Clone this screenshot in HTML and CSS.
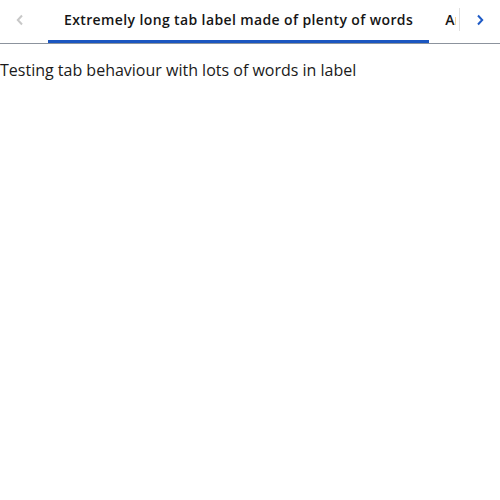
FILE: index.html
```html
<!DOCTYPE html>
<html>
<head>
<meta charset="utf-8">
<link rel="stylesheet" href="styles.css">
</head>
<body>
<div class="tabbar">
  <button class="nav nav-prev" aria-label="Previous">
    <svg width="10" height="12" viewBox="0 0 10 12"><path d="M7 1.5 L2.8 6 L7 10.5" fill="none" stroke="#c8c8c8" stroke-width="2"/></svg>
  </button>
  <div class="scroller">
    <div class="tab active">Extremely long tab label made of plenty of words</div>
    <div class="tab">Another tab</div>
  </div>
  <button class="nav nav-next" aria-label="Next">
    <svg width="10" height="12" viewBox="0 0 10 12"><path d="M3 1.5 L7.2 6 L3 10.5" fill="none" stroke="#1f5bc6" stroke-width="2"/></svg>
  </button>
</div>
<div class="panel">Testing tab behaviour with lots of words in label</div>
</body>
</html>
```

FILE: styles.css
```css
html, body { margin: 0; padding: 0; background: #fff; }
body { font-family: "Open Sans", sans-serif; color: #1a1a1a; }
.tabbar {
  display: flex;
  align-items: stretch;
  height: 44px;
  box-sizing: border-box;
  border-bottom: 1px solid #8c939d;
}
.nav {
  width: 40px;
  flex: 0 0 40px;
  border: 0;
  background: none;
  padding: 0;
  display: flex;
  align-items: center;
  justify-content: center;
}
.nav-prev { padding-bottom: 3px; }
.nav-next {
  flex-basis: 41px;
  width: 41px;
  border-left: 1px solid #e0e0e0;
  margin: 8px 0 12px 3px;
  padding-top: 1px;
}
.scroller {
  flex: 1;
  display: flex;
  overflow: hidden;
  padding-left: 8px;
}
.tab {
  flex: 0 0 auto;
  white-space: nowrap;
  padding: 0 16px;
  font-size: 14px;
  font-weight: 600;
  line-height: 40px;
  color: #161616;
  box-sizing: border-box;
  height: 44px;
  margin-bottom: -1px;
  border-bottom: 4px solid transparent;
  letter-spacing: 0.38px;
}
.tab.active { border-bottom-color: #1b56c0; }
.panel {
  font-size: 16px;
  line-height: 24px;
  padding-top: 14px;
  color: #1a1a1a;
}
```
